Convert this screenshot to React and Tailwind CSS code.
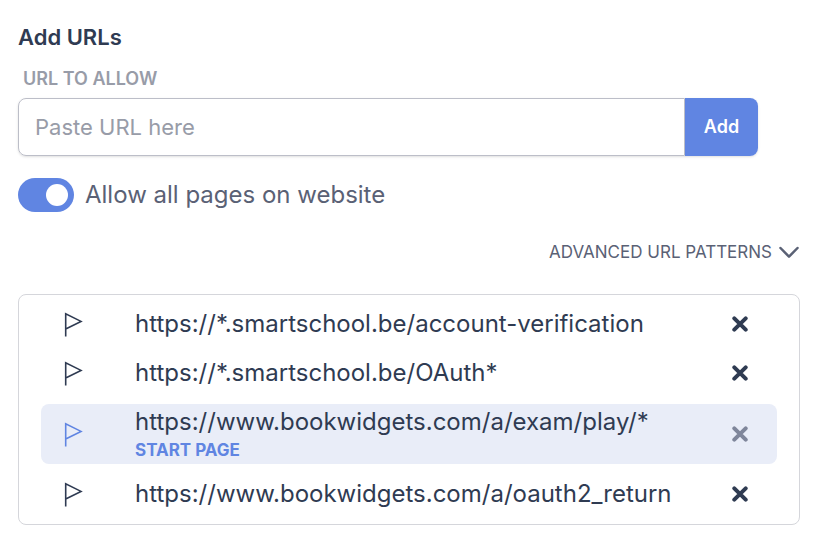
import React, { useState } from "react";

const initialUrls = [
    { url: "https://*.smartschool.be/account-verification" },
    { url: "https://*.smartschool.be/OAuth*" },
    { url: "https://www.bookwidgets.com/a/exam/play/*", start: true },
    { url: "https://www.bookwidgets.com/a/oauth2_return" },
];

function FlagIcon() {
    return (
        <svg width="20" height="26" viewBox="0 0 20 26" fill="none" stroke="currentColor" strokeWidth="1.6" aria-hidden="true">
            <path d="M2.7 25.5V2.8L18 10.4L2.7 18" />
        </svg>
    );
}

function CrossIcon() {
    return (
        <svg width="16" height="16" viewBox="0 0 16 16" fill="none" stroke="currentColor" strokeWidth="4" strokeLinecap="round" aria-hidden="true">
            <path d="M2.3 2.3L13.7 13.7M13.7 2.3L2.3 13.7" />
        </svg>
    );
}

function UrlRow({ item, onStart, onRemove }) {
    return (
        <li
            className={
                item.start
                    ? "mt-1.5 mb-[5px] flex h-[60px] items-center rounded-lg bg-[#e9edf8] pl-[22px] pr-[29px]"
                    : "flex h-12 items-center pl-[22px] pr-[29px]"
            }
        >
            <button
                type="button"
                aria-label="Set as start page"
                onClick={onStart}
                className={item.start ? "shrink-0 text-[#6085e2]" : "shrink-0 text-[#2f3b52]"}
            >
                <FlagIcon />
            </button>
            <div className="ml-[52px] min-w-0 flex-1">
                <p className="truncate text-2xl leading-8">{item.url}</p>
                {item.start && (
                    <p className="text-[17px] font-bold leading-6 text-[#6085e2]">START PAGE</p>
                )}
            </div>
            <button
                type="button"
                aria-label="Remove URL"
                onClick={onRemove}
                className={item.start ? "shrink-0 text-[#7f869b]" : "shrink-0 text-[#2f3b52]"}
            >
                <CrossIcon />
            </button>
        </li>
    );
}

export default function App() {
    const [urls, setUrls] = useState(initialUrls);
    const [value, setValue] = useState("");
    const [allowAll, setAllowAll] = useState(true);

    function handleSubmit(e) {
        e.preventDefault();
        if (!value.trim()) return;
        setUrls([...urls, { url: value.trim() }]);
        setValue("");
    }

    return (
        <main className="min-h-screen bg-white px-[18px] py-[21px] font-['Inter','Liberation_Sans',sans-serif] text-[#2f3b52]">
            <h1 className="text-[22px] font-semibold leading-8">Add URLs</h1>

            <form onSubmit={handleSubmit} className="mr-[42px]">
                <label htmlFor="url" className="mt-3 ml-[5px] block text-lg font-semibold leading-7 text-[#989ca8]">
                    URL TO ALLOW
                </label>
                <div className="mt-[5px] flex h-[58px] rounded-lg shadow-sm">
                    <input
                        id="url"
                        type="text"
                        placeholder="Paste URL here"
                        value={value}
                        onChange={(e) => setValue(e.target.value)}
                        className="min-w-0 flex-1 rounded-l-lg border border-[#bcbec8] px-4 text-[22px] outline-none placeholder:text-[#989ca8]"
                    />
                    <button type="submit" className="w-[73px] rounded-r-lg bg-[#6085e2] text-lg font-semibold text-white">
                        Add
                    </button>
                </div>
            </form>

            <div className="mt-[22px] flex h-[34px] items-center gap-[11px]">
                <input
                    id="allow-all"
                    type="checkbox"
                    role="switch"
                    checked={allowAll}
                    onChange={(e) => setAllowAll(e.target.checked)}
                    className="flex h-[34px] w-14 shrink-0 appearance-none items-center rounded-full bg-[#bcbec8] px-1.5 before:size-[22px] before:rounded-full before:bg-white checked:justify-end checked:bg-[#6085e2]"
                />
                <label htmlFor="allow-all" className="text-2xl leading-8 text-[#5a6175]">
                    Allow all pages on website
                </label>
            </div>

            <div className="mt-6 flex justify-end">
                <button type="button" className="flex items-center gap-1.5 text-[17px] leading-8 text-[#5a6175]">
                    ADVANCED URL PATTERNS
                    <svg width="22" height="14" viewBox="0 0 22 14" fill="none" stroke="currentColor" strokeWidth="2.5" strokeLinecap="round" strokeLinejoin="round" aria-hidden="true">
                        <path d="M2.5 3L11 11.7L19.5 3" />
                    </svg>
                </button>
            </div>

            <ul className="mt-[26px] flex flex-col gap-px rounded-lg border border-[#d5d6db] px-[22px] pt-[5px] pb-1.5">
                {urls.map((item, i) => (
                    <UrlRow
                        key={item.url}
                        item={item}
                        onStart={() => setUrls(urls.map((u, j) => ({ ...u, start: j === i })))}
                        onRemove={() => setUrls(urls.filter((_, j) => j !== i))}
                    />
                ))}
            </ul>
        </main>
    );
}
